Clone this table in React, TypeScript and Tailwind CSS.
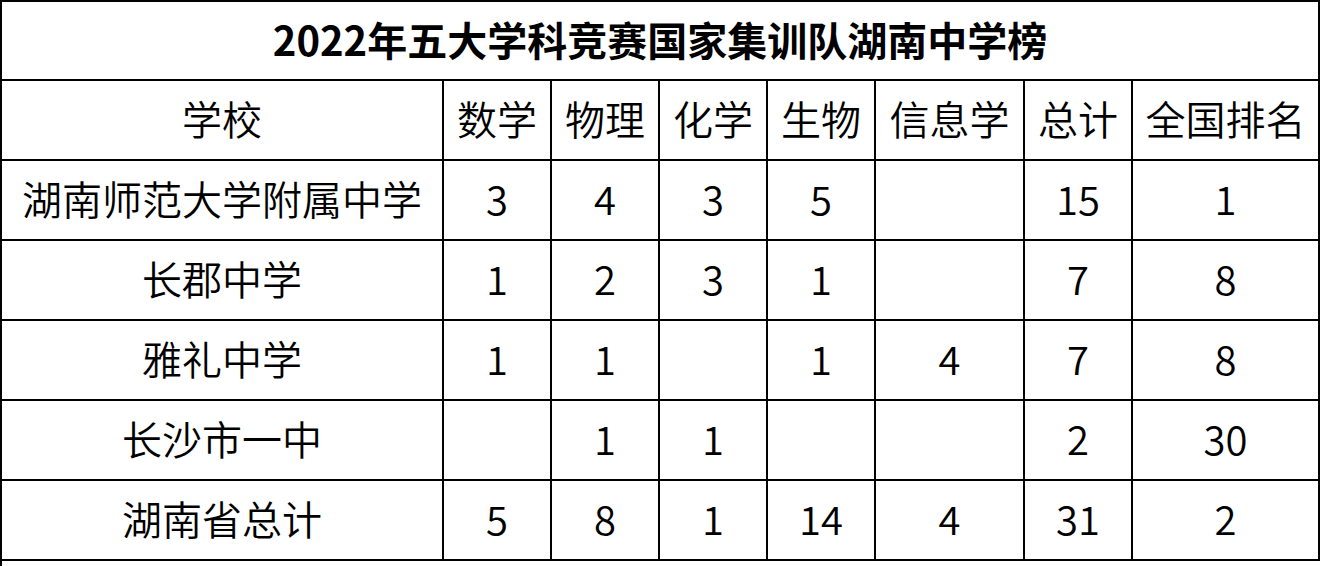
import React from 'react';

const columns = ['学校', '数学', '物理', '化学', '生物', '信息学', '总计', '全国排名'];

const rows: string[][] = [
  ['湖南师范大学附属中学', '3', '4', '3', '5', '', '15', '1'],
  ['长郡中学', '1', '2', '3', '1', '', '7', '8'],
  ['雅礼中学', '1', '1', '', '1', '4', '7', '8'],
  ['长沙市一中', '', '1', '1', '', '', '2', '30'],
  ['湖南省总计', '5', '8', '1', '14', '4', '31', '2'],
];

const cell =
  'flex items-center justify-center border-r-2 border-b-2 border-black h-[80px] pb-[4px] text-[40px] font-[350] leading-none text-black whitespace-nowrap';

export default function App() {
  return (
    <div
      className="w-[1324px] h-[566px] bg-white overflow-hidden"
      style={{ fontFamily: '"Noto Sans CJK SC", "Noto Sans", sans-serif' }}
    >
      <div className="w-[1320px] border-l-2 border-t-2 border-black">
        {/* Title row */}
        <div className="flex items-center justify-center h-[79px] pb-[4px] border-r-2 border-b-2 border-black text-[40px] font-bold leading-none text-black">
          2022年五大学科竞赛国家集训队湖南中学榜
        </div>

        <div className="grid grid-cols-[442px_108px_108px_108px_108px_149px_108px_187px]">
          {columns.map((c) => (
            <div key={c} className={cell}>
              {c}
            </div>
          ))}
          {rows.map((r, i) =>
            r.map((v, j) => (
              <div key={`${i}-${j}`} className={cell}>
                {v}
              </div>
            ))
          )}
        </div>
      </div>
      <div className="h-[5px] w-0 border-l-2 border-black" />
    </div>
  );
}
